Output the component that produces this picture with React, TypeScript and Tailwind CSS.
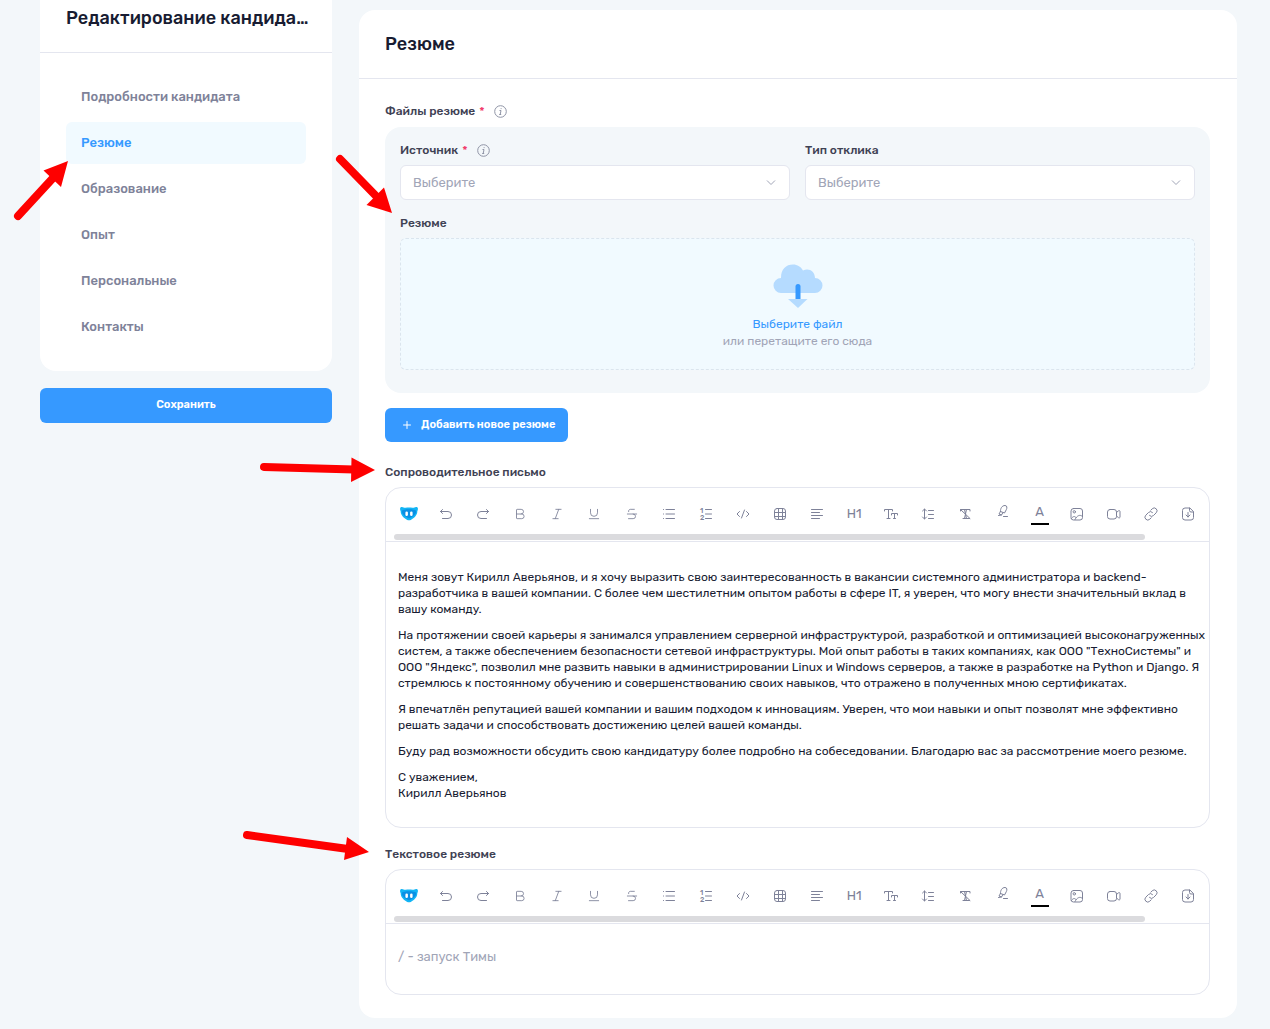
import { useId, type ReactNode } from "react";
import { Bold, Italic, Plus, Strikethrough, Underline } from "lucide-react";

const navItems = [
  "Подробности кандидата",
  "Резюме",
  "Образование",
  "Опыт",
  "Персональные",
  "Контакты",
];

const letter = [
  [
    "Меня зовут Кирилл Аверьянов, и я хочу выразить свою заинтересованность в вакансии системного администратора и backend-",
    "разработчика в вашей компании. С более чем шестилетним опытом работы в сфере IT, я уверен, что могу внести значительный вклад в",
    "вашу команду.",
  ],
  [
    "На протяжении своей карьеры я занимался управлением серверной инфраструктурой, разработкой и оптимизацией высоконагруженных",
    "систем, а также обеспечением безопасности сетевой инфраструктуры. Мой опыт работы в таких компаниях, как ООО \"ТехноСистемы\" и",
    "ООО \"Яндекс\", позволил мне развить навыки в администрировании Linux и Windows серверов, а также в разработке на Python и Django. Я",
    "стремлюсь к постоянному обучению и совершенствованию своих навыков, что отражено в полученных мною сертификатах.",
  ],
  [
    "Я впечатлён репутацией вашей компании и вашим подходом к инновациям. Уверен, что мои навыки и опыт позволят мне эффективно",
    "решать задачи и способствовать достижению целей вашей команды.",
  ],
  [
    "Буду рад возможности обсудить свою кандидатуру более подробно на собеседовании. Благодарю вас за рассмотрение моего резюме.",
  ],
  ["С уважением,", "Кирилл Аверьянов"],
];

function Glyph({ children }: { children: ReactNode }) {
  return (
    <svg
      width="16"
      height="16"
      viewBox="0 0 16 16"
      fill="none"
      stroke="currentColor"
      strokeWidth="1"
      strokeLinecap="round"
      strokeLinejoin="round"
      aria-hidden="true"
    >
      {children}
    </svg>
  );
}

const tools: Array<{ name: string; icon: ReactNode }> = [
  {
    name: "Тима",
    icon: (
      <svg width="20" height="16" viewBox="0 0 20 16" aria-hidden="true">
        <path
          d="M1.2 2C1.6.7 3.4.6 4.6 1.4c.5.4 1.2.5 2 .4 2.2-.3 4.6-.3 6.8 0 .8.1 1.5 0 2-.4C16.6.6 18.4.7 18.8 2c.3 1.200 0 2.300-.5 3.200.2 4.200-3.800 7.200-6.500 8.700-1 .6-2.600.6-3.600 0C5.500 12.400 1.500 9.400 1.700 5.200 1.200 4.300.9 3.200 1.200 2z"
          fill="#12b5f5"
        />
        <path d="M2.800 4.800c2-2 12.400-2 14.400 0 .3 3.400-3.400 6.200-7.200 7.600C6.200 11 2.500 8.200 2.800 4.800z" fill="#0a90e4" />
        <rect x="6.400" y="5.600" width="2.500" height="4.400" rx="1.250" fill="#fff" />
        <rect x="11.100" y="5.600" width="2.500" height="4.400" rx="1.250" fill="#fff" />
      </svg>
    ),
  },
  {
    name: "Отменить",
    icon: <Glyph><path d="M4.500 3.500l-2 2 2 2M2.500 5.500h7.500a3.500 3.500 0 0 1 0 7H4.500" /></Glyph>,
  },
  {
    name: "Повторить",
    icon: <Glyph><path d="M11.500 3.500l2 2-2 2M13.500 5.500H6a3.500 3.500 0 0 0 0 7h5.500" /></Glyph>,
  },
  { name: "Полужирный", icon: <Bold size={14} strokeWidth={1.500} /> },
  { name: "Курсив", icon: <Italic size={14} strokeWidth={1.500} /> },
  { name: "Подчёркнутый", icon: <Underline size={14} strokeWidth={1.500} /> },
  { name: "Зачёркнутый", icon: <Strikethrough size={14} strokeWidth={1.500} /> },
  {
    name: "Список",
    icon: <Glyph><path d="M2.500 3.500h.1M2.500 8h.1M2.500 12.500h.1M5 3.500h8.500M5 8h8.500M5 12.500h8.500" /></Glyph>,
  },
  {
    name: "Нумерованный список",
    icon: (
      <Glyph>
        <text x="2" y="7" fontSize="7" fontWeight="500" fill="currentColor" stroke="none">1</text>
        <text x="2" y="14" fontSize="7" fontWeight="500" fill="currentColor" stroke="none">2</text>
        <path d="M7.500 3.500h6M7.500 8h6M7.500 12.500h6" />
      </Glyph>
    ),
  },
  {
    name: "Код",
    icon: <Glyph><path d="M4.500 5.500L2 8l2.500 2.500M11.500 5.500L14 8l-2.500 2.500M9.500 4l-3 8" /></Glyph>,
  },
  {
    name: "Таблица",
    icon: (
      <Glyph>
        <rect x="2.500" y="2.500" width="11" height="11" rx="2.500" />
        <path d="M6.500 2.500v11M10.500 2.500v11M2.500 6.500h11M2.500 10.500h11" />
      </Glyph>
    ),
  },
  {
    name: "Выравнивание",
    icon: <Glyph><path d="M2.500 3.500h11M2.500 6.500h8M2.500 9.500h11M2.500 12.500h8" /></Glyph>,
  },
  { name: "Заголовок", icon: <span className="text-[13px]">H1</span> },
  {
    name: "Размер шрифта",
    icon: <Glyph><path d="M1.500 5V3.500h8V5M5.500 3.500v9M4 12.500h3M8.500 9V7.500h6V9M11.500 7.500v5M10.500 12.500h2" /></Glyph>,
  },
  {
    name: "Межстрочный интервал",
    icon: <Glyph><path d="M4.500 3v10M2.500 5l2-2 2 2M2.500 11l2 2 2-2M8.500 4.500h5M8.500 8.500h5M8.500 12.500h5" /></Glyph>,
  },
  {
    name: "Очистить формат",
    icon: <Glyph><path d="M3.500 5V3.500h9.500V5M9.500 3.500l-2 9M6 12.500h6.500M3.500 3.500l9.500 9M7.500 3.500l2 9" /></Glyph>,
  },
  {
    name: "Выделение",
    icon: (
      <span className="mb-1.5">
        <Glyph><path d="M5.500 8.500C5.200 5.500 7 2.500 10 2.500c2.200 0 2.200 2.500 1.300 4.200L9.500 10l-4-1.500zM5.500 8.500L4 11l2.500 1M8 9.500L6.500 12l-3 .5M8.500 13.500h4" /></Glyph>
      </span>
    ),
  },
  {
    name: "Цвет текста",
    icon: <span className="w-[18px] border-b-2 border-black pb-[3px] text-center text-[13px] leading-4">A</span>,
  },
  {
    name: "Изображение",
    icon: (
      <Glyph>
        <rect x="2" y="2.500" width="11.500" height="11.500" rx="2.500" />
        <circle cx="5.300" cy="5.800" r="1.200" />
        <path d="M2.300 12.500c2-2.500 3.500-2.500 4.700-1M6 13.500c2-4 5-5.500 7.500-3" />
      </Glyph>
    ),
  },
  {
    name: "Видео",
    icon: (
      <Glyph>
        <rect x="1.500" y="3.500" width="9" height="9.500" rx="2.500" />
        <path d="M10.500 6.500l2-1.700c.7-.5 1.500-.2 1.500.7v5.500c0 .9-.8 1.200-1.500.7l-2-1.700" />
      </Glyph>
    ),
  },
  {
    name: "Ссылка",
    icon: <Glyph><path d="M6.500 9.500a2.800 2.800 0 0 0 4 0l2.700-2.700a2.800 2.800 0 0 0-4-4L7.800 4.200M9.500 6.500a2.800 2.800 0 0 0-4 0L2.800 9.200a2.800 2.800 0 0 0 4 4l1.400-1.400" /></Glyph>,
  },
  {
    name: "Вставить файл",
    icon: <Glyph><path d="M9.500 2h-4.500a2.500 2.500 0 0 0-2.500 2.500v7a2.500 2.500 0 0 0 2.500 2.500h6a2.500 2.500 0 0 0 2.500-2.500V6zM9.500 2v2.500a1.500 1.500 0 0 0 1.500 1.500h2.500M8 6.500v4.500M6 9l2 2 2-2" /></Glyph>,
  },
];

function InfoIcon() {
  return (
    <svg className="ml-[9px] text-[#8f94a6]" width="13" height="13" viewBox="0 0 13 13" fill="none" stroke="currentColor" aria-hidden="true">
      <circle cx="6.500" cy="6.500" r="5.800" />
      <path d="M5.500 5.500h1.500l-.8 4M5.200 9.500h2M7.100 3.200v.9" />
    </svg>
  );
}

type FieldLabelProps = {
  text: string;
  htmlFor?: string;
  id?: string;
  required?: boolean;
};

function FieldLabel({ text, htmlFor, id, required }: FieldLabelProps) {
  return (
    <div className="flex h-4 items-center text-xs leading-4 font-medium text-[#3f4254]">
      <label id={id} htmlFor={htmlFor}>
        {text}
        {required && <span className="ml-1 text-[#f1416c]">*</span>}
      </label>
      {required && <InfoIcon />}
    </div>
  );
}

function SelectField({ label, required }: { label: string; required?: boolean }) {
  const id = useId();
  return (
    <div className="flex flex-1 flex-col gap-[7px]">
      <FieldLabel text={label} htmlFor={id} required={required} />
      <div className="relative">
        <select
          id={id}
          defaultValue=""
          className="h-[35px] w-full appearance-none rounded-md border border-[#e4e6ef] bg-white px-3 text-[13px] text-[#a1a5b7]"
        >
          <option value="">Выберите</option>
        </select>
        <svg className="pointer-events-none absolute top-3 right-[14px] text-[#a1a5b7]" width="10" height="12" viewBox="0 0 10 12" fill="none" stroke="currentColor" aria-hidden="true">
          <path d="M1 3.500l4 4 4-4" />
        </svg>
      </div>
    </div>
  );
}

function Editor({ label, children }: { label: string; children: (labelId: string) => ReactNode }) {
  const id = useId();
  return (
    <section className="flex flex-col gap-[7px]">
      <FieldLabel text={label} id={id} />
      <div className="rounded-2xl border border-[#e4e6ef]">
        <div className="border-b border-[#e4e6ef] pt-[14px]">
          <div role="toolbar" aria-labelledby={id} className="flex items-center justify-between pr-[9px] pl-[11px]">
            {tools.map((tool) => (
              <button
                key={tool.name}
                type="button"
                aria-label={tool.name}
                className="flex h-6 w-6 items-center justify-center text-[#7e8299]"
              >
                {tool.icon}
              </button>
            ))}
          </div>
          <div className="mt-2 mb-px px-2">
            <div className="h-1.5 w-[93%] rounded-full bg-[#dbdbde]" />
          </div>
        </div>
        {children(id)}
      </div>
    </section>
  );
}

function Arrows() {
  return (
    <svg className="pointer-events-none absolute top-0 left-0" width="400" height="880" fill="#fe0000" stroke="#fe0000" strokeWidth="8" strokeLinecap="round" aria-hidden="true">
      <path d="M18 216L53 178M340 159L378 198M264 467L354 469.500M247 835L348 849" />
      <path stroke="none" d="M68 161L43.500 170.500L61 187zM392 213L384 187.500L366.500 205zM375 470L351.500 457.500L351 482zM369 852L347 837L344 860z" />
    </svg>
  );
}

export default function App() {
  return (
    <div className="relative flex min-h-screen items-start gap-[27px] bg-[#f3f7fa] pr-[33px] pb-[11px] pl-10 font-[Rubik,Roboto,sans-serif]">
      <aside className="w-[292px] shrink-0">
        <div className="rounded-b-2xl bg-white pb-[23px]">
          <div className="border-b border-[#e4e6ef] pt-1.5 pr-5 pb-[22px] pl-[26px]">
            <h2 className="text-lg leading-6 font-medium whitespace-nowrap text-[#181c32]">Редактирование кандида…</h2>
          </div>
          <nav className="mt-[23px] flex flex-col gap-1 px-[26px]">
            {navItems.map((item) => (
              <a
                key={item}
                href="#"
                className={`flex h-[42px] items-center rounded-md px-[15px] text-[13px] font-medium ${
                  item === "Резюме" ? "bg-[#f1faff] text-[#3699ff]" : "text-[#7e8299]"
                }`}
              >
                {item}
              </a>
            ))}
          </nav>
        </div>
        <button type="button" className="mt-[17px] h-[35px] w-full rounded-md bg-[#3699ff] text-[11px] font-semibold text-white">
          Сохранить
        </button>
      </aside>

      <main className="mt-[10px] min-w-0 flex-1 rounded-2xl bg-white pb-[23px]">
        <div className="border-b border-[#e4e6ef] px-[26px] py-[22px]">
          <h1 className="text-lg leading-6 font-medium text-[#181c32]">Резюме</h1>
        </div>
        <div className="flex flex-col pt-6 pr-[27px] pl-[26px]">
          <FieldLabel text="Файлы резюме" required />
          <div className="mt-2 rounded-2xl bg-[#f3f7fa] px-[15px] pt-[15px] pb-[23px]">
            <div className="flex gap-[15px]">
              <SelectField label="Источник" required />
              <SelectField label="Тип отклика" />
            </div>
            <div className="mt-[15px] flex flex-col gap-[7px]">
              <FieldLabel text="Резюме" htmlFor="resume-file" />
              <label
                htmlFor="resume-file"
                className="relative flex h-[132px] cursor-pointer flex-col items-center rounded-md border border-dashed border-[#dbe5ee] bg-[#f1faff] pt-6 text-xs"
              >
                <svg width="50" height="46" viewBox="0 0 50 46" aria-hidden="true">
                  <path d="M8 30a7.500 7.500 0 0 1 0-15C8 6 13 1.500 20 1.500c4.500 0 8 2.500 10 6 5.500-3 12 .5 12 7.500a7.500 7.500 0 0 1 0 15z" fill="#b5dbff" />
                  <path d="M15 36h19.500L25 45z" fill="#b5dbff" />
                  <path d="M22.500 36V23.500a2.500 2.500 0 0 1 5 0V36z" fill="#3699ff" />
                </svg>
                <span className="mt-[7px] leading-4 text-[#3699ff]">Выберите файл</span>
                <span className="mt-px leading-4 text-[#a1a5b7]">или перетащите его сюда</span>
                <input id="resume-file" type="file" className="sr-only" />
              </label>
            </div>
          </div>
          <button
            type="button"
            className="mt-[15px] mb-[22px] flex h-[34px] items-center gap-2 self-start rounded-md bg-[#3699ff] pr-[13px] pl-4 text-[11px] font-semibold text-white"
          >
            <Plus size={12} strokeWidth={2} />
            Добавить новое резюме
          </button>

          <Editor label="Сопроводительное письмо">
            {(labelId) => (
              <div
                role="textbox"
                aria-multiline="true"
                aria-labelledby={labelId}
                contentEditable
                suppressContentEditableWarning
                className="flex flex-col gap-[10px] px-3 pt-[27px] pb-[26px] text-xs leading-4 text-[#181c32] outline-none"
              >
                {letter.map((lines) => (
                  <p key={lines[0]}>
                    {lines.map((line) => (
                      <span key={line} className="block whitespace-nowrap">{line}</span>
                    ))}
                  </p>
                ))}
              </div>
            )}
          </Editor>

          <div className="mt-[18px]">
            <Editor label="Текстовое резюме">
              {(labelId) => (
                <textarea
                  aria-labelledby={labelId}
                  placeholder="/ - запуск Тимы"
                  className="block h-[70px] w-full resize-none px-3 pt-[23px] text-[13px] leading-5 placeholder:text-[#a1a5b7] focus:outline-none"
                />
              )}
            </Editor>
          </div>
        </div>
      </main>
      <Arrows />
    </div>
  );
}
